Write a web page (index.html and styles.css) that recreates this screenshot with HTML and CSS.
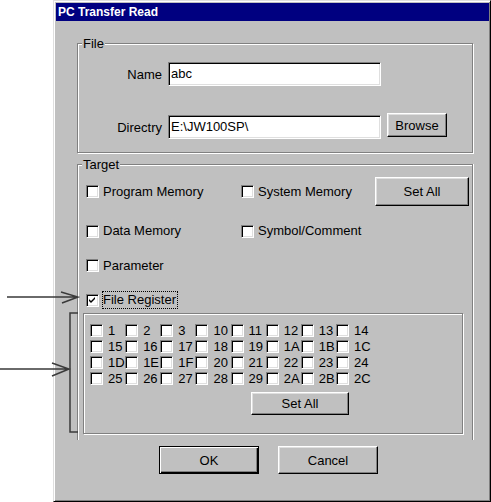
FILE: index.html
```html
<!DOCTYPE html>
<html lang="en">
<head>
    <meta charset="UTF-8">
    <meta name="viewport" content="width=device-width, initial-scale=1.0">
    <title>PC Transfer Read</title>
    <link rel="stylesheet" href="styles.css">
</head>
<body>
    <!-- arrows and bracket pointing at the file register part -->
    <svg class="notes" width="100" height="450" viewBox="0 0 100 450">
        <g fill="none" stroke="#3a3a3a" stroke-width="1.5">
            <path d="M7 297 H78 M61 292 L78 297 L62 303"/>
            <path d="M0 369 H69 M52 363 L69 369 L52 376"/>
            <path d="M78 313 H70 V432 H78"/>
        </g>
    </svg>

    <div class="dialog">
        <div class="title-bar">PC Transfer Read</div>

        <div class="group file-group">
            <span class="group-title">File</span>
            <div class="file-grid">
                <span class="field-label">Name</span>
                <div class="text-field">abc</div>
                <span></span>
                <span class="field-label">Directry</span>
                <div class="text-field">E:\JW100SP\</div>
                <button class="btn browse">Browse</button>
            </div>
        </div>

        <div class="group target-group">
            <span class="group-title">Target</span>
            <div class="target-grid">
                <div class="check-item"><span class="box"></span><span class="check-label">Program Memory</span></div>
                <div class="check-item"><span class="box"></span><span class="check-label">System Memory</span></div>
                <button class="btn set-all">Set All</button>
                <div class="check-item"><span class="box"></span><span class="check-label">Data Memory</span></div>
                <div class="check-item"><span class="box"></span><span class="check-label">Symbol/Comment</span></div>
                <div class="check-item wide"><span class="box"></span><span class="check-label">Parameter</span></div>
                <div class="check-item wide">
                    <span class="box">
                        <svg width="9" height="9" viewBox="0 0 9 9"><polygon points="1,3 3,5 7,1 7,3 3,7 1,5" fill="#000"/></svg>
                    </span>
                    <span class="check-label focused">File Register</span>
                </div>
            </div>

            <div class="reg-box">
                <div class="reg-grid">
                    <div class="reg-item"><span class="box"></span>1</div>
                    <div class="reg-item"><span class="box"></span>2</div>
                    <div class="reg-item"><span class="box"></span>3</div>
                    <div class="reg-item"><span class="box"></span>10</div>
                    <div class="reg-item"><span class="box"></span>11</div>
                    <div class="reg-item"><span class="box"></span>12</div>
                    <div class="reg-item"><span class="box"></span>13</div>
                    <div class="reg-item"><span class="box"></span>14</div>

                    <div class="reg-item"><span class="box"></span>15</div>
                    <div class="reg-item"><span class="box"></span>16</div>
                    <div class="reg-item"><span class="box"></span>17</div>
                    <div class="reg-item"><span class="box"></span>18</div>
                    <div class="reg-item"><span class="box"></span>19</div>
                    <div class="reg-item"><span class="box"></span>1A</div>
                    <div class="reg-item"><span class="box"></span>1B</div>
                    <div class="reg-item"><span class="box"></span>1C</div>

                    <div class="reg-item"><span class="box"></span>1D</div>
                    <div class="reg-item"><span class="box"></span>1E</div>
                    <div class="reg-item"><span class="box"></span>1F</div>
                    <div class="reg-item"><span class="box"></span>20</div>
                    <div class="reg-item"><span class="box"></span>21</div>
                    <div class="reg-item"><span class="box"></span>22</div>
                    <div class="reg-item"><span class="box"></span>23</div>
                    <div class="reg-item"><span class="box"></span>24</div>

                    <div class="reg-item"><span class="box"></span>25</div>
                    <div class="reg-item"><span class="box"></span>26</div>
                    <div class="reg-item"><span class="box"></span>27</div>
                    <div class="reg-item"><span class="box"></span>28</div>
                    <div class="reg-item"><span class="box"></span>29</div>
                    <div class="reg-item"><span class="box"></span>2A</div>
                    <div class="reg-item"><span class="box"></span>2B</div>
                    <div class="reg-item"><span class="box"></span>2C</div>
                </div>
                <button class="btn reg-set-all">Set All</button>
            </div>
        </div>

        <div class="footer">
            <button class="btn default">OK</button>
            <button class="btn">Cancel</button>
        </div>
    </div>
</body>
</html>
```

FILE: styles.css
```css
body {
    margin: 0;
    background: #fff;
    font-family: 'Liberation Sans', Arial, sans-serif;
    font-size: 13px;
    color: #000;
    position: relative;
    overflow: hidden;
}

/* annotation drawn on top of the page */
.notes {
    position: absolute;
    left: 0;
    top: 0;
    pointer-events: none;
    z-index: 2;
}

.dialog {
    box-sizing: border-box;
    width: 438px;
    height: 502px;
    margin-left: 53px;
    padding: 2px 1px 2px 2px;
    background: #c0c0c0;
    border: 1px solid;
    border-color: #dfdfdf #000 #000 #dfdfdf;
    box-shadow: inset 1px 1px #fff, inset -1px -1px #808080;
}

.title-bar {
    height: 18px;
    line-height: 18px;
    padding-left: 2px;
    background: #000080;
    color: #fff;
    font-weight: bold;
    font-size: 12px;
}

/* etched group frame */
.group {
    box-sizing: border-box;
    width: 396px;
    margin-left: 21px;
    border: 1px solid #808080;
    box-shadow: inset 1px 1px #fff, 1px 1px #fff;
}

/* caption sits on the top line of the frame */
.group-title {
    display: block;
    width: max-content;
    margin: -8px 0 0 4px;
    padding: 0 1px;
    line-height: 15px;
    background: #c0c0c0;
}

.file-group {
    margin-top: 22px;
    padding-bottom: 13px;
}

.file-group .group-title {
    margin-bottom: 11px;
}

.file-grid {
    display: grid;
    grid-template-columns: 84px 213px 60px;
    grid-auto-rows: 24px;
    column-gap: 6px;
    row-gap: 29px;
    align-items: center;
}

.field-label {
    text-align: right;
}

.text-field {
    box-sizing: border-box;
    height: 24px;
    line-height: 22px;
    padding-left: 2px;
    background: #fff;
    border: 1px solid;
    border-color: #808080 #fff #fff #808080;
    box-shadow: inset 1px 1px #000, inset -1px -1px #dfdfdf;
    white-space: nowrap;
}

.btn {
    box-sizing: border-box;
    font-family: 'Liberation Sans', Arial, sans-serif;
    font-size: 13px;
    color: #000;
    background: #c0c0c0;
    padding: 0;
    border: 1px solid;
    border-color: #fff #000 #000 #fff;
    box-shadow: inset -1px -1px #808080, inset 1px 1px #dfdfdf;
}

.browse {
    height: 24px;
    margin-top: -4px;
}

.target-group {
    margin-top: 11px;
    height: 276px;
    padding: 0 0 6px 5px;
    border-bottom: 0;
    box-shadow: inset 1px 1px #fff, 1px 0 #fff;
}

.target-group .group-title {
    margin-left: -1px;
    margin-bottom: 5px;
}

.target-grid {
    display: grid;
    margin-left: 3px;
    grid-template-columns: 155px 134px 94px;
    grid-template-rows: 29px 18px 19px 18px;
    row-gap: 16px;
    align-items: center;
}

.set-all {
    height: 29px;
}

.check-item {
    display: flex;
    align-items: center;
}

.check-item.wide {
    grid-column: 1 / -1;
}

/* sunken check box */
.box {
    box-sizing: border-box;
    width: 13px;
    height: 13px;
    flex: none;
    display: flex;
    align-items: center;
    justify-content: center;
    background: #fff;
    border: 1px solid;
    border-color: #808080 #fff #fff #808080;
    box-shadow: inset 1px 1px #000, inset -1px -1px #dfdfdf;
}

.check-label {
    margin-left: 3px;
    padding-right: 1px;
    line-height: 16px;
    border: 1px dotted transparent;
    white-space: nowrap;
}

.check-label.focused {
    border-color: #000;
}

.reg-box {
    box-sizing: border-box;
    width: 380px;
    height: 121px;
    margin-top: 4px;
    border: 1px solid #808080;
    box-shadow: inset 1px 1px #fff, 1px 1px #fff;
}

.reg-grid {
    display: grid;
    padding: 8px 0 0 6px;
    grid-template-columns: repeat(8, 35.15px);
    grid-auto-rows: 16px;
}

.reg-item {
    display: flex;
    align-items: center;
    gap: 5px;
    white-space: nowrap;
}

.reg-set-all {
    display: block;
    width: 98px;
    height: 23px;
    margin: 6px 0 0 167px;
}

.footer {
    display: flex;
    gap: 19px;
    margin-top: 6px;
    padding-left: 103px;
}

.footer .btn {
    width: 100px;
    height: 28px;
}

.footer .btn.default {
    border-color: #000;
    box-shadow: inset 1px 1px #fff, inset -1px -1px #000, inset -2px -2px #808080;
}
```
